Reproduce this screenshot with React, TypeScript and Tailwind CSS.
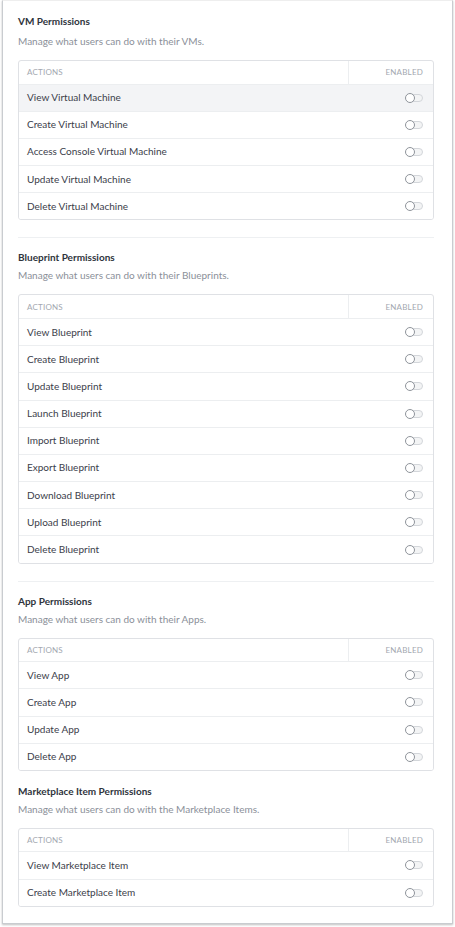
import React from "react";

type Section = {
  title: string;
  subtitle: string;
  actions: string[];
  divider: boolean;
};

const sections: Section[] = [
  {
    title: "VM Permissions",
    subtitle: "Manage what users can do with their VMs.",
    actions: [
      "View Virtual Machine",
      "Create Virtual Machine",
      "Access Console Virtual Machine",
      "Update Virtual Machine",
      "Delete Virtual Machine",
    ],
    divider: true,
  },
  {
    title: "Blueprint Permissions",
    subtitle: "Manage what users can do with their Blueprints.",
    actions: [
      "View Blueprint",
      "Create Blueprint",
      "Update Blueprint",
      "Launch Blueprint",
      "Import Blueprint",
      "Export Blueprint",
      "Download Blueprint",
      "Upload Blueprint",
      "Delete Blueprint",
    ],
    divider: true,
  },
  {
    title: "App Permissions",
    subtitle: "Manage what users can do with their Apps.",
    actions: ["View App", "Create App", "Update App", "Delete App"],
    divider: false,
  },
  {
    title: "Marketplace Item Permissions",
    subtitle: "Manage what users can do with the Marketplace Items.",
    actions: ["View Marketplace Item", "Create Marketplace Item"],
    divider: false,
  },
];

function Toggle() {
  return (
    <div className="relative h-[10px] w-[18px]">
      <div className="absolute left-[2px] top-[1px] h-[8px] w-[16px] rounded-full border border-[#d3d6da] bg-[#f3f4f5]" />
      <div className="absolute left-0 top-0 h-[10px] w-[10px] rounded-full border border-[#8f949b] bg-white" />
    </div>
  );
}

function PermissionTable({ actions, highlightFirst }: { actions: string[]; highlightFirst: boolean }) {
  return (
    <div className="mt-[12px] overflow-hidden rounded-[3px] border border-[#dfe1e5]">
      <div className="flex h-[22.5px] items-center text-[8px] uppercase tracking-[0.2px] text-[#a3a8b0]">
        <div className="flex h-full flex-1 items-center border-r border-[#eceef0] pl-[8px]">Actions</div>
        <div className="w-[84px] pr-[10px] text-right">Enabled</div>
      </div>
      {actions.map((a, i) => (
        <div
          key={a}
          className={
            "flex h-[27.2px] items-center justify-between border-t border-[#eceef0] pl-[8px] pr-[10px] text-[10px] text-[#3b404a] " +
            (highlightFirst && i === 0 ? "bg-[#f3f4f6]" : "bg-white")
          }
        >
          <span>{a}</span>
          <Toggle />
        </div>
      ))}
    </div>
  );
}

export default function App() {
  return (
    <div
      className="min-h-[927px] w-[455px] bg-white"
      style={{ fontFamily: "Lato, 'Liberation Sans', sans-serif" }}
    >
      <div className="mx-[2px] w-[451px] border-x border-b border-t border-[#c9ccd0] border-t-[#eeeeee] bg-white pb-[16px] pl-[15px] pr-[18px] pt-[13px] shadow-[0_1px_2px_rgba(0,0,0,0.25)]">
        {sections.map((s, idx) => (
          <div key={s.title} className={idx === 0 ? "" : idx === 3 ? "mt-[13px]" : "mt-[12px]"}>
            <div className="text-[10px] font-bold leading-[14px] text-[#2f343c]">{s.title}</div>
            <div className={(idx === 0 ? "mt-[6px]" : "mt-[4px]") + " text-[10px] leading-[14px] text-[#8b9099]"}>
              {s.subtitle}
            </div>
            <PermissionTable actions={s.actions} highlightFirst={idx === 0} />
            {s.divider && <div className="mt-[17px] h-px bg-[#eef0f2]" />}
          </div>
        ))}
      </div>
    </div>
  );
}
